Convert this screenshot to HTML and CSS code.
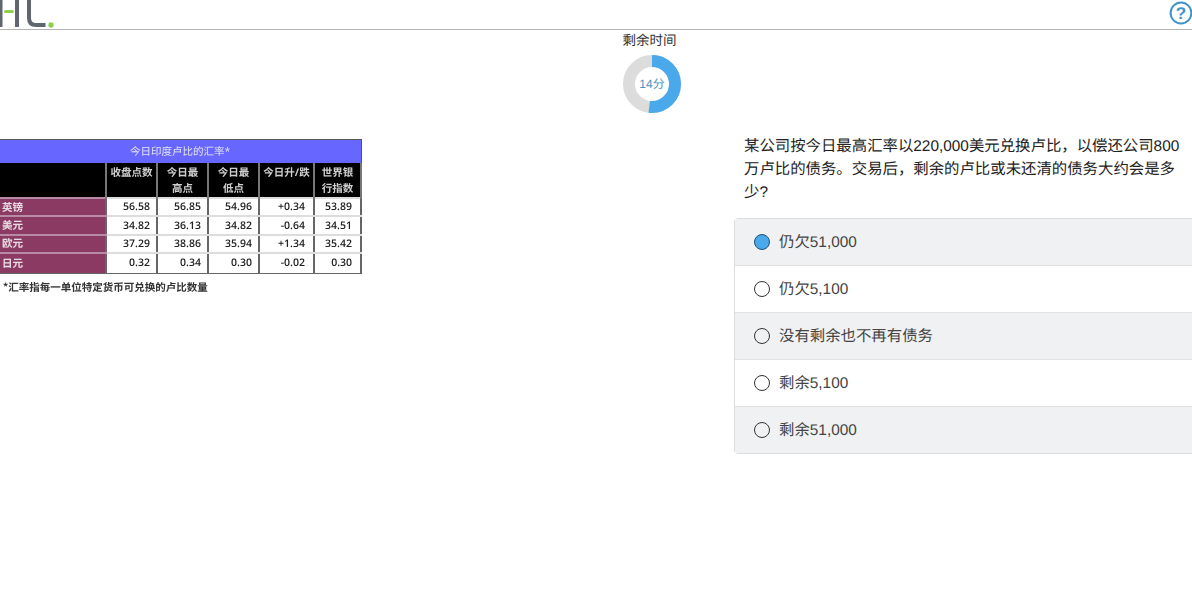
FILE: index.html
```html
<!DOCTYPE html>
<html lang="zh">
<head>
<meta charset="utf-8">
<title>剩余时间</title>
<link rel="stylesheet" href="styles.css">
</head>
<body>
<header class="topbar">
  <svg class="logo" width="60" height="29" viewBox="0 0 60 29">
    <path d="M0.5 0V27M17 0V27" class="logo-dark"/>
    <path d="M5.5 11.5H12.5" class="logo-green"/>
    <path d="M29 0V18Q29 25 36 25H45.5" class="logo-dark"/>
    <circle cx="51" cy="25" r="2.7" fill="#8fd14f"/>
  </svg>
  <svg class="help" width="24" height="24" viewBox="0 0 24 24">
    <circle cx="12" cy="12" r="10.4" fill="none" stroke="#3f93c9" stroke-width="2"/>
    <text x="12" y="18" text-anchor="middle" class="help-mark">?</text>
  </svg>
</header>
<section class="timer">
  <div class="timer-label">剩余时间</div>
  <div class="donut">
    <svg width="58" height="58" viewBox="0 0 58 58">
      <circle cx="29" cy="29" r="23" fill="none" stroke="#dcdcdc" stroke-width="12"/>
      <circle cx="29" cy="29" r="23" fill="none" stroke="#4aa9ea" stroke-width="12" pathLength="100" stroke-dasharray="52 48" transform="rotate(-90 29 29)"/>
    </svg>
    <span class="donut-text">14分</span>
  </div>
</section>
<main class="content">
  <div class="left">
    <table class="rates">
      <colgroup>
        <col class="c0"><col class="c1"><col class="c1"><col class="c1"><col class="c4"><col class="c5">
      </colgroup>
      <tr><th colspan="6" class="title">今日印度卢比的汇率*</th></tr>
      <tr class="head">
        <th></th><th>收盘点数</th><th>今日最<br>高点</th><th>今日最<br>低点</th><th>今日升/跌</th><th>世界银<br>行指数</th>
      </tr>
      <tr><th class="name">英镑</th><td>56.58</td><td>56.85</td><td>54.96</td><td>+0.34</td><td>53.89</td></tr>
      <tr><th class="name">美元</th><td>34.82</td><td>36.13</td><td>34.82</td><td>-0.64</td><td>34.51</td></tr>
      <tr><th class="name">欧元</th><td>37.29</td><td>38.86</td><td>35.94</td><td>+1.34</td><td>35.42</td></tr>
      <tr class="last"><th class="name">日元</th><td>0.32</td><td>0.34</td><td>0.30</td><td>-0.02</td><td>0.30</td></tr>
    </table>
    <p class="note">*汇率指每一单位特定货币可兑换的卢比数量</p>
  </div>
  <div class="right">
    <p class="question">某公司按今日最高汇率以220,000美元兑换卢比，以偿还公司800万卢比的债务。交易后，剩余的卢比或未还清的债务大约会是多少?</p>
    <div class="options">
      <div class="option shaded"><span class="radio selected"></span>仍欠51,000</div>
      <div class="option"><span class="radio"></span>仍欠5,100</div>
      <div class="option shaded"><span class="radio"></span>没有剩余也不再有债务</div>
      <div class="option"><span class="radio"></span>剩余5,100</div>
      <div class="option shaded"><span class="radio"></span>剩余51,000</div>
    </div>
  </div>
</main>
</body>
</html>
```
FILE: styles.css
```css
* { box-sizing: border-box; }
html, body { margin: 0; height: 100%; }
body {
  width: 1192px;
  height: 614px;
  overflow: hidden;
  background: #fff;
  font-family: "Liberation Sans", "Noto Sans CJK SC", sans-serif;
  text-rendering: geometricPrecision;
  color: #333;
}
.topbar {
  height: 30px;
  border-bottom: 1px solid #b4b4b4;
  display: flex;
  justify-content: space-between;
  align-items: flex-start;
}
.logo { display: block; }
.logo-dark { fill: none; stroke: #5f6670; stroke-width: 4; }
.logo-green { fill: none; stroke: #8fd14f; stroke-width: 3; stroke-linecap: round; }
.help { display: block; margin: 1px -1px 0 0; }
.help-mark { font: bold 17px "Liberation Sans", sans-serif; fill: #3f93c9; }

.timer {
  width: 1304px;
  height: 109px;
  display: flex;
  flex-direction: column;
  align-items: center;
}
.timer-label {
  font-size: 13.5px;
  line-height: 18px;
  margin-top: 2px;
  padding-right: 5px;
  color: #333;
}
.donut { position: relative; width: 58px; height: 58px; margin-top: 5px; }
.donut svg { display: block; }
.donut-text {
  position: absolute;
  inset: 0 0 2px 0;
  display: flex;
  align-items: center;
  justify-content: center;
  font-size: 12px;
  color: #4b93c3;
}

.content { display: flex; align-items: flex-start; width: 1304px; }
.left { width: 734px; flex: none; }
.rates {
  border-collapse: collapse;
  table-layout: fixed;
  width: 361px;
  font-family: "Open Sans", "Noto Sans CJK SC", sans-serif;
  font-size: 10.5px;
  color: #222;
  filter: blur(0.3px);
}
.c0 { width: 106px; }
.c1 { width: 51px; }
.c4 { width: 55px; }
.c5 { width: 47px; }
.rates tr { height: 18.4px; }
.rates td, .rates th { padding: 0; border: 1px solid #666; }
.rates .title {
  height: 24px;
  background: #6766ff;
  color: #e4e4f4;
  font-weight: 400;
  line-height: 14px;
  border-color: #555;
  border-left: 0;
  border-bottom: 1px solid #000;
}
.rates .head th {
  height: 34px;
  background: #000;
  color: #cfcfcf;
  font-weight: 700;
  line-height: 16px;
  vertical-align: top;
  padding-top: 1px;
  border-color: #777;
  border-width: 0 2px;
}
.rates .head th:first-child { border-left: 0; }
.rates td {
  text-align: right;
  padding-right: 6px;
  font-weight: 600;
  border-width: 2px;
  border-color: #ddd #666;
}
.rates td:nth-child(5), .rates td:nth-child(6) { padding-right: 8px; }
.rates .name {
  background: #8b3a63;
  color: #e9dbe3;
  text-align: left;
  padding-left: 2px;
  font-weight: 700;
  border-width: 2px;
  border-color: #b88aa3 #666;
  border-left: 0;
}
.rates .last { height: 20px; }
.rates .last td, .rates .last th { border-bottom: 1px solid #666; }
.note {
  margin: 7px 0 0 3px;
  font-family: "Noto Sans CJK SC", sans-serif;
  font-size: 10.5px;
  font-weight: 700;
  line-height: 14px;
  color: #333;
  filter: blur(0.3px);
}

.right { width: 570px; flex: none; margin-top: -4.5px; }
.question {
  margin: 0 0 14px 10px;
  width: 440px;
  font-size: 15.4px;
  line-height: 23px;
  color: #222;
}
.options {
  border: 1px solid #ddd;
  border-radius: 4px;
}
.option {
  height: 47px;
  display: flex;
  align-items: center;
  padding: 0 0 2px 19px;
  font-size: 15.4px;
  color: #444;
  border-bottom: 1px solid #e2e2e2;
}
.option:last-child { height: 46px; border-bottom: 0; }
.shaded { background: #f0f1f2; }
.radio {
  width: 16px;
  height: 16px;
  margin: 3px 9px 0 0;
  border: 1.3px solid #333;
  border-radius: 50%;
  background: #fff;
  flex: none;
}
.shaded .radio { background: transparent; }
.radio.selected, .shaded .radio.selected { background: #4aa9ea; border-color: #1f4f77; }
```
